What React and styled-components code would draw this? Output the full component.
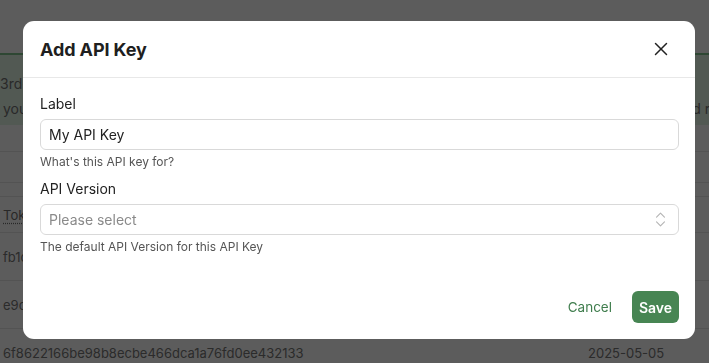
import React from "react";
import styled, { createGlobalStyle } from "styled-components";
import { X, ChevronsUpDown } from "lucide-react";

const Global = createGlobalStyle`
  * { box-sizing: border-box; }
  html, body { margin: 0; padding: 0; background: #ffffff; overflow: hidden; }
  body { font-family: Inter, "Noto Sans", sans-serif; color: #222; }
`;

const Page = styled.div`
  width: 709px;
  height: 363px;
  overflow: hidden;
  background: #ffffff;
`;

const TopBar = styled.div`
  height: 53px;
  background: #ffffff;
`;

const Alert = styled.div`
  height: 72px;
  border-top: 2px solid #7fc48f;
  background: #e4f5e7;
  padding-top: 16px;
  font-size: 14px;
  line-height: 25px;
  color: #727272;
  white-space: nowrap;
  overflow: hidden;
`;

const AlertLine = styled.div`
  padding-left: ${(p) => p.$indent}px;
`;

const Divider = styled.div`
  height: ${(p) => p.$h}px;
  border-bottom: 1px solid #e6e6e6;
`;

const Row = styled.div`
  display: grid;
  grid-template-columns: 585px 1fr;
  align-items: center;
  height: ${(p) => p.$h}px;
  padding-left: 3px;
  border-bottom: 1px solid #e6e6e6;
  font-size: 13px;
  color: #777;
  white-space: nowrap;
  overflow: hidden;
`;

const HeadCell = styled.span`
  text-decoration: underline dotted;
  text-underline-offset: 3px;
  color: #707070;
`;

const Overlay = styled.div`
  position: fixed;
  inset: 0;
  background: rgba(0, 0, 0, 0.64);
  display: flex;
  align-items: flex-start;
  padding: 21px 0 0 23px;
`;

const Modal = styled.div`
  width: 672px;
  height: 318px;
  background: #ffffff;
  border-radius: 11px;
  display: flex;
  flex-direction: column;
`;

const Header = styled.div`
  height: 57px;
  border-bottom: 1px solid #e8e8e8;
  display: flex;
  align-items: center;
  justify-content: space-between;
  padding: 0 23px 0 17px;
`;

const Title = styled.h2`
  margin: 0;
  font-size: 18px;
  font-weight: 700;
  color: #1f1f1f;
  letter-spacing: -0.1px;
`;

const CloseButton = styled.button`
  border: 0;
  background: none;
  padding: 0;
  width: 22px;
  height: 22px;
  display: flex;
  align-items: center;
  justify-content: center;
  color: #222;
  cursor: pointer;
`;

const Body = styled.div`
  padding: 16px 16px 0 17px;
  display: flex;
  flex-direction: column;
`;

const Field = styled.div`
  display: flex;
  flex-direction: column;
  margin-bottom: 9px;
`;

const Label = styled.label`
  font-size: 14px;
  line-height: 20px;
  color: #222;
  margin-bottom: 5px;
`;

const Box = styled.div`
  height: 31px;
  border: 1px solid #d9d9d9;
  border-radius: 6px;
  display: flex;
  align-items: center;
  justify-content: space-between;
  padding: 0 8px 0 8px;
  font-size: 14px;
  color: ${(p) => (p.$placeholder ? "#8a8a8a" : "#222")};
`;

const Help = styled.div`
  font-size: 12px;
  line-height: 16px;
  color: #555;
  margin-top: 4px;
`;

const Footer = styled.div`
  margin-top: auto;
  display: flex;
  justify-content: flex-end;
  align-items: center;
  gap: 8px;
  padding: 0 16px 16px 16px;
`;

const CancelButton = styled.button`
  border: 0;
  background: none;
  height: 32px;
  padding: 0 12px;
  font-family: inherit;
  font-size: 13.5px;
  color: #3f7d4d;
  cursor: pointer;
`;

const SaveButton = styled.button`
  border: 0;
  background: #478553;
  color: #ffffff;
  height: 32px;
  width: 47px;
  border-radius: 6px;
  font-family: inherit;
  font-size: 14px;
  font-weight: 600;
  cursor: pointer;
`;

export default function App() {
  return (
    <>
      <Global />
      <Page>
        <TopBar />
        <Alert>
          <AlertLine $indent={0}>
            3rd-party applications can use API keys to access your account on your behalf.
          </AlertLine>
          <AlertLine $indent={3}>
            you can create a separate key for each integration, and revoke them at any time. Old keys can be revoked regularly.
          </AlertLine>
        </Alert>
        <Divider $h={27} />
        <Divider $h={31} />
        <Divider $h={14} />
        <Row $h={36}>
          <span><HeadCell>Token</HeadCell></span>
          <span>Created</span>
        </Row>
        <Row $h={48}>
          <span>fb1c0e2d7a94b3c58e6f21d0a9b47c3e5f8d2a61</span>
          <span>2025-05-12</span>
        </Row>
        <Row $h={48}>
          <span>e9c4a71f2b8d05e36c9a4f17d2b80e5a3c6f9d14</span>
          <span>2025-05-08</span>
        </Row>
        <Row $h={48}>
          <span>6f8622166be98b8ecbe466dca1a76fd0ee432133</span>
          <span>2025-05-05</span>
        </Row>
      </Page>
      <Overlay>
        <Modal role="dialog" aria-label="Add API Key">
          <Header>
            <Title>Add API Key</Title>
            <CloseButton aria-label="Close">
              <X size={22} strokeWidth={1.6} />
            </CloseButton>
          </Header>
          <Body>
            <Field>
              <Label>Label</Label>
              <Box>My API Key</Box>
              <Help>What's this API key for?</Help>
            </Field>
            <Field>
              <Label>API Version</Label>
              <Box $placeholder>
                Please select
                <ChevronsUpDown size={19} strokeWidth={1.4} color="#b4b4b4" />
              </Box>
              <Help>The default API Version for this API Key</Help>
            </Field>
          </Body>
          <Footer>
            <CancelButton>Cancel</CancelButton>
            <SaveButton>Save</SaveButton>
          </Footer>
        </Modal>
      </Overlay>
    </>
  );
}
